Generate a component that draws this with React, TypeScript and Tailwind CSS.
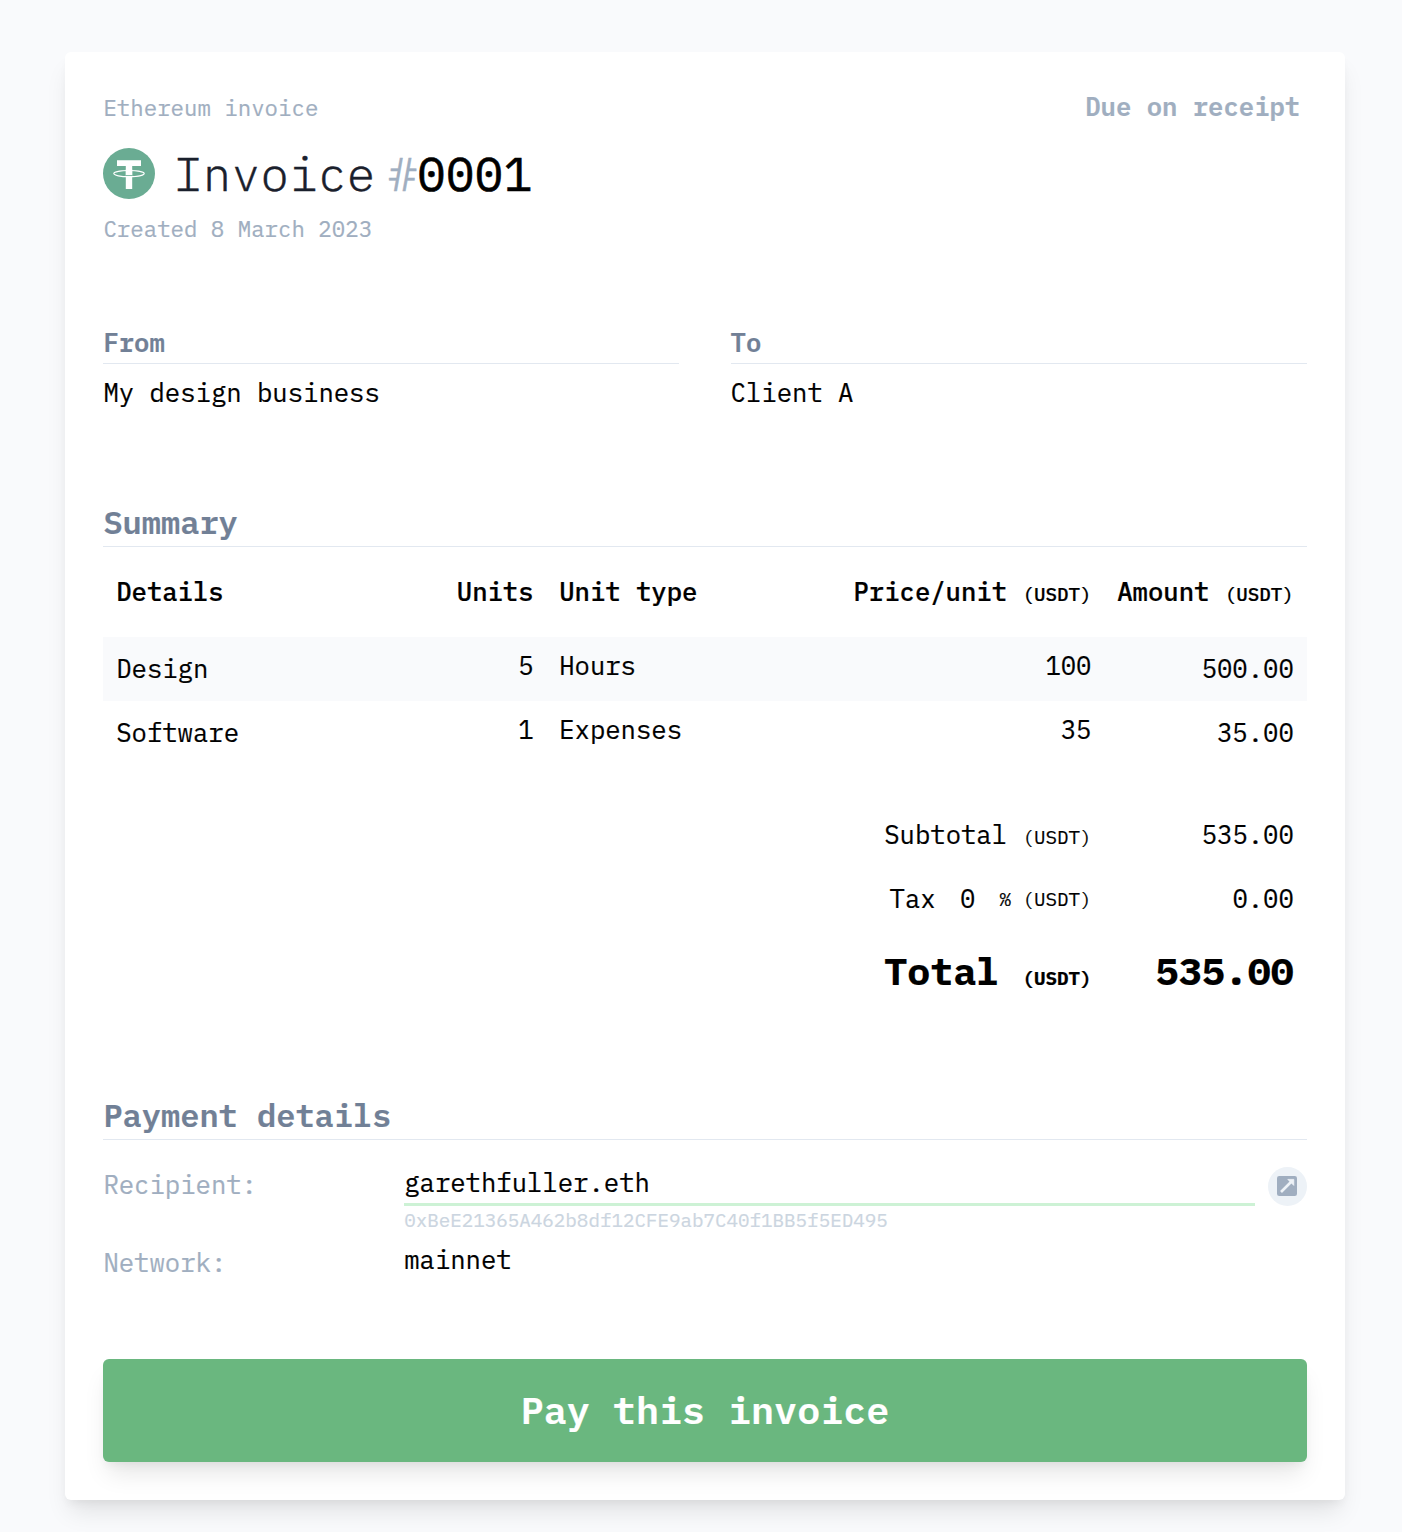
import React from "react";

const items = [
  { details: "Design", units: "5", type: "Hours", price: "100", amount: "500.00" },
  { details: "Software", units: "1", type: "Expenses", price: "35", amount: "35.00" },
];

const COLS = "grid grid-cols-[240px_203px_278.5px_279.4px_202.3px]";

function Usdt() {
  return <span className="text-[19.2px]">(USDT)</span>;
}

function TetherIcon() {
  return (
    <svg viewBox="0 0 52 51" className="h-[51px] w-[52px] shrink-0">
      <ellipse cx="26" cy="25.5" rx="26" ry="25.5" fill="#6aac93" />
      <path d="M14 12.2H38V17.9H29.2V41H22.8V17.9H14Z" fill="#fff" />
      <path d="M22.8 27.6H29.2" stroke="#6aac93" strokeWidth="0.9" />
      <ellipse cx="26" cy="25.6" rx="15.2" ry="3.1" fill="none" stroke="#fff" strokeWidth="1.2" />
      <path d="M22.8 21.5H29.2V27H22.8Z" fill="#fff" />
    </svg>
  );
}

function ExternalIcon() {
  return (
    <svg viewBox="0 0 20 20" className="h-5 w-5">
      <rect width="20" height="20" rx="2.2" fill="#a0aec0" />
      <path d="M4 16L14.5 5.5" stroke="#edf2f7" strokeWidth="2.6" fill="none" />
      <path d="M10.8 3.4H16.8V9.4Z" fill="#edf2f7" stroke="#edf2f7" strokeWidth="0.8" strokeLinejoin="round" />
    </svg>
  );
}

function SectionTitle({ children }: { children: React.ReactNode }) {
  return (
    <h2 className="flex h-[43px] items-center border-b border-[#e2e8f0] pb-[7px] text-[32px] font-semibold text-[#718096]">
      {children}
    </h2>
  );
}

function Party({ label, name }: { label: string; name: string }) {
  return (
    <div>
      <h3 className="flex h-9 items-center border-b border-[#e2e8f0] pb-[5px] font-semibold text-[#718096]">{label}</h3>
      <p className="flex h-[62px] items-center pb-1">{name}</p>
    </div>
  );
}

export default function App() {
  return (
    <div className="h-[1532px] w-[1402px] overflow-hidden bg-[#f9fafc] px-[65px] pt-[52px] pr-[57px] font-['IBM_Plex_Mono','Liberation_Mono',monospace] text-[25.6px] leading-none whitespace-nowrap text-black antialiased [-webkit-text-stroke:0.2px_currentColor]">
      <main className="h-[1448px] w-[1280px] rounded-[6px] bg-white px-[38.4px] pt-[38px] shadow-[0_16px_24px_-5px_rgba(0,0,0,0.1),0_6px_10px_-3px_rgba(0,0,0,0.05)]">
        <header>
          <div className="flex h-10 items-center justify-between pb-1 text-[#a0aec0]">
            <span className="text-[22.4px]">Ethereum invoice</span>
            <span className="pr-[6.4px] pb-0.5 font-semibold">Due on receipt</span>
          </div>
          <div className="flex h-[87px] items-center">
            <TetherIcon />
            <h1 className="flex pb-[1px] pl-[18.4px] text-[48px] font-light text-[#1a202c] [-webkit-text-stroke:0.4px_currentColor]">
              Invoice
              <span className="ml-[12.8px] text-[#a0aec0] [-webkit-text-stroke:0.4px_#a0aec0]">#</span>
              <span className="font-normal text-black [-webkit-text-stroke:0.6px_#000]">0001</span>
            </h1>
          </div>
          <p className="flex h-7 items-center pb-1 text-[22.4px] text-[#a0aec0]">Created 8 March 2023</p>
        </header>

        <section className="mt-[83px] grid grid-cols-2 gap-[51.2px]">
          <Party label="From" name="My design business" />
          <Party label="To" name="Client A" />
        </section>

        <section className="mt-[78px]">
          <SectionTitle>Summary</SectionTitle>
          <div className={`${COLS} h-[90px] items-center font-medium`}>
            <div className="px-[12.8px]">Details</div>
            <div className="px-[12.8px] text-right">Units</div>
            <div className="px-[12.8px]">Unit type</div>
            <div className="px-[12.8px] text-right">
              Price/unit <Usdt />
            </div>
            <div className="px-[12.8px] text-right">
              Amount <Usdt />
            </div>
          </div>
          {items.map((item, i) => (
            <div key={item.details} className={`${COLS} h-16 items-center ${i % 2 === 0 ? "bg-[#f9fafc]" : "bg-white"}`}>
              <div className="px-[12.8px]">{item.details}</div>
              <div className="px-[12.8px] pb-[6px] text-right">{item.units}</div>
              <div className="px-[12.8px] pb-[6px]">{item.type}</div>
              <div className="px-[12.8px] pb-[6px] text-right">{item.price}</div>
              <div className="px-[12.8px] text-right">{item.amount}</div>
            </div>
          ))}
          <div className="mt-10 grid grid-cols-[1fr_202.3px] grid-rows-[64px_64px_85px] items-center text-right">
            <div className="pr-[12.8px] pb-1">
              Subtotal <Usdt />
            </div>
            <div className="pr-[12.8px] pb-1">535.00</div>
            <div className="flex items-center justify-end pr-[12.8px] pb-1">
              <span>Tax</span>
              <span className="ml-[24.4px]">0</span>
              <span className="ml-6 text-[19.2px]">% (USDT)</span>
            </div>
            <div className="pr-[12.8px] pb-1">0.00</div>
            <div className="pr-[12.8px] pb-2 text-[38.4px] font-bold">
              Total <Usdt />
            </div>
            <div className="pr-[12.8px] pb-2 text-[38.4px] font-bold">535.00</div>
          </div>
        </section>

        <section className="mt-[79px]">
          <SectionTitle>Payment details</SectionTitle>
          <div className="mt-[27px] flex items-start">
            <div className="flex h-10 w-[300.8px] items-center pb-1 text-[#a0aec0]">Recipient:</div>
            <div className="w-[850.4px]">
              <div className="flex h-[39px] items-center border-b-[3px] border-[#cdf2d5] pb-1">garethfuller.eth</div>
              <div className="flex h-[31px] items-center pb-1 text-[19.2px] text-[#cbd5e0]">
                0xBeE21365A462b8df12CFE9ab7C40f1BB5f5ED495
              </div>
            </div>
            <button className="ml-[13px] flex h-[39px] w-[39px] items-center justify-center rounded-full bg-[#edf2f7] pb-px">
              <ExternalIcon />
            </button>
          </div>
          <div className="mt-[7px] flex h-[42px] items-center pb-1">
            <div className="w-[300.8px] text-[#a0aec0]">Network:</div>
            <div className="pb-[6px]">mainnet</div>
          </div>
        </section>

        <button className="mt-[73px] flex h-[103px] w-full items-center justify-center rounded-[6px] bg-[#6ab77f] pb-px text-[38.4px] font-semibold text-white shadow-[0_16px_24px_-5px_rgba(0,0,0,0.1),0_6px_10px_-3px_rgba(0,0,0,0.05)]">
          Pay this invoice
        </button>
      </main>
    </div>
  );
}
